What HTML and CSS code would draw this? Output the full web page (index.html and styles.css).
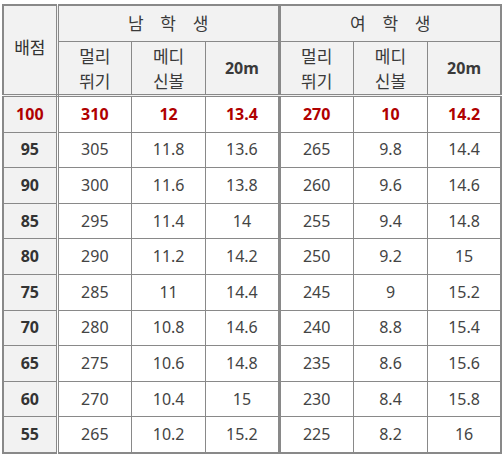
FILE: index.html
```html
<!DOCTYPE html>
<html lang="ko">
<head>
<meta charset="utf-8">
<link rel="stylesheet" href="styles.css">
</head>
<body>
<table class="score">
  <colgroup>
    <col class="c-score">
    <col class="c-a"><col class="c-b"><col class="c-c">
    <col class="c-a"><col class="c-b"><col class="c-c">
  </colgroup>
  <thead>
    <tr class="h1">
      <th rowspan="2" class="first">배점</th>
      <th colspan="3" class="group gsep">남 학 생</th>
      <th colspan="3" class="group">여 학 생</th>
    </tr>
    <tr class="h2">
      <th>멀리<br>뛰기</th><th>메디<br>신볼</th><th class="gsep bold">20m</th>
      <th>멀리<br>뛰기</th><th>메디<br>신볼</th><th class="bold">20m</th>
    </tr>
  </thead>
  <tbody>
    <tr class="top"><th class="first">100</th><td>310</td><td>12</td><td class="gsep">13.4</td><td>270</td><td>10</td><td>14.2</td></tr>
    <tr><th class="first">95</th><td>305</td><td>11.8</td><td class="gsep">13.6</td><td>265</td><td>9.8</td><td>14.4</td></tr>
    <tr><th class="first">90</th><td>300</td><td>11.6</td><td class="gsep">13.8</td><td>260</td><td>9.6</td><td>14.6</td></tr>
    <tr><th class="first">85</th><td>295</td><td>11.4</td><td class="gsep">14</td><td>255</td><td>9.4</td><td>14.8</td></tr>
    <tr><th class="first">80</th><td>290</td><td>11.2</td><td class="gsep">14.2</td><td>250</td><td>9.2</td><td>15</td></tr>
    <tr><th class="first">75</th><td>285</td><td>11</td><td class="gsep">14.4</td><td>245</td><td>9</td><td>15.2</td></tr>
    <tr><th class="first">70</th><td>280</td><td>10.8</td><td class="gsep">14.6</td><td>240</td><td>8.8</td><td>15.4</td></tr>
    <tr><th class="first">65</th><td>275</td><td>10.6</td><td class="gsep">14.8</td><td>235</td><td>8.6</td><td>15.6</td></tr>
    <tr><th class="first">60</th><td>270</td><td>10.4</td><td class="gsep">15</td><td>230</td><td>8.4</td><td>15.8</td></tr>
    <tr><th class="first">55</th><td>265</td><td>10.2</td><td class="gsep">15.2</td><td>225</td><td>8.2</td><td>16</td></tr>
  </tbody>
</table>
</body>
</html>
```
FILE: styles.css
```css
html, body {
  margin: 0;
  padding: 0;
  background: #ffffff;
}
body {
  padding: 4px 0 0 2px;
  font-family: "Noto Sans", "Noto Sans CJK KR", sans-serif;
}
.score {
  border-collapse: collapse;
  table-layout: fixed;
  width: 500px;
  border: 2px solid #898989;
  color: #444444;
  font-size: 16px;
}
.c-score { width: 54px; }
.c-a { width: 74px; }
.c-b { width: 74px; }
.c-c { width: 73px; }
.score th, .score td {
  border: 1px solid #898989;
  text-align: center;
  vertical-align: middle;
  padding: 0;
  font-weight: normal;
  line-height: 25px;
}
.score thead th {
  background: #f2f2f2;
  font-family: "Noto Sans CJK KR", sans-serif;
  font-size: 17px;
  color: #3a3a3a;
}
.h1 th { height: 33px; padding-bottom: 2px; }
.h2 th { height: 52px; border-bottom: 3px double #898989; }
.score th.first {
  background: #f2f2f2;
  border-right: 3px double #898989;
  font-weight: bold;
  color: #333333;
}
.score thead th.first {
  border-bottom: 3px double #898989;
  font-weight: normal;
  padding-bottom: 7px;
}
.group { letter-spacing: 6px; text-indent: 6px; }
.score .gsep { border-right: 3px solid #898989; }
.score thead th.bold { font-family: "Noto Sans", sans-serif; font-size: 16px; font-weight: bold; }
.score tbody td, .score tbody th { height: 34.6px; }
.score tbody tr.top td, .score tbody tr.top th {
  color: #b00000;
  font-weight: bold;
}
```
